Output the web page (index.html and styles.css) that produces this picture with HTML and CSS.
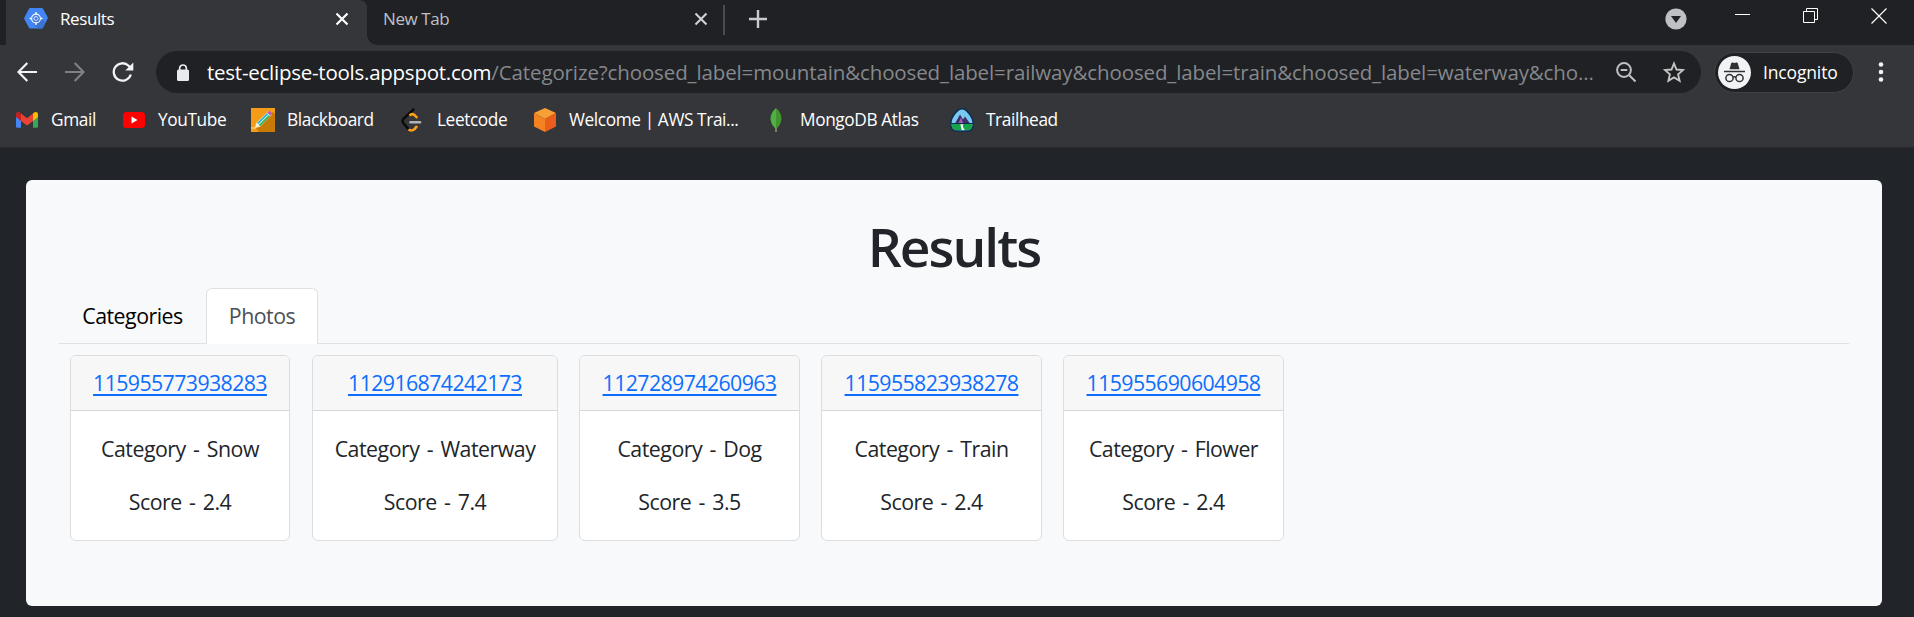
FILE: index.html
```html
<!DOCTYPE html>
<html lang="en">
<head>
<meta charset="utf-8">
<title>Results</title>
<link rel="stylesheet" href="styles.css">
</head>
<body>
<header class="browser">
  <div class="tabstrip">
    <div class="tab tab-active">
      <svg class="tab-icon" width="24" height="24" viewBox="0 0 24 24"><path d="M6.2 1h11.6q.8 0 1.200.7l4.600 8.300q.5.900 0 1.800l-4.600 9q-.4.700-1.200.7H6.200q-.8 0-1.200-.7L.4 12.300q-.5-.900 0-1.800L5 1.700Q5.400 1 6.200 1Z" fill="#4285f4"/><path d="m15 8 6.500 7.500-3 5.300q-.4.700-1.200.7H13l-4-6Z" fill="#3a74d4"/><circle cx="12" cy="11.500" r="4.400" fill="none" stroke="#fff" stroke-width="1.100"/><circle cx="12" cy="11.500" r="2" fill="none" stroke="#d5e3fc"/><path d="M12 5V7M12 16v2M5.500 11.500h2M16.500 11.500h2" stroke="#fff" stroke-width="1.300"/></svg>
      <span class="tab-title">Results</span>
      <svg class="tab-close" width="14" height="14" viewBox="0 0 14 14"><path d="m1.500 1.500 11 11m0-11-11 11" stroke="#fff" stroke-width="2.200"/></svg>
    </div>
    <div class="tab tab-idle">
      <span class="tab-title">New Tab</span>
      <svg class="tab-close" width="14" height="14" viewBox="0 0 14 14"><path d="m1.500 1.500 11 11m0-11-11 11" stroke="#d0d3d6" stroke-width="2.100"/></svg>
    </div>
    <span class="tab-divider"></span>
    <svg class="new-tab" width="18" height="18" viewBox="0 0 18 18"><path d="M9 0v18M0 9h18" stroke="#c8cbcf" stroke-width="2.400"/></svg>
    <div class="window-controls">
      <svg width="22" height="22" viewBox="0 0 22 22"><circle cx="11" cy="11" r="10.600" fill="#bdc1c6"/><path d="M6 8h10l-5 7Z" fill="#202124"/></svg>
      <svg class="minimize" width="15" height="1" viewBox="0 0 15 1"><path d="M0 .5h15" stroke="#fff"/></svg>
      <svg class="restore" width="15" height="15" viewBox="0 0 15 15" fill="none" stroke="#fff"><path d="M.5 3.500h11v11H.5ZM3.500 3.500v-3h11v11h-3"/></svg>
      <svg class="close" width="16" height="16" viewBox="0 0 16 16"><path d="m.5.500 15 15m0-15-15 15" stroke="#fff" stroke-width="1.200"/></svg>
    </div>
  </div>

  <div class="toolbar">
    <svg class="nav-icon" width="20" height="20" viewBox="0 0 20 20" fill="none" stroke="#f1f3f4" stroke-width="2.200"><path d="M20 10H1.500M10.300 1 1.500 10l8.800 9"/></svg>
    <svg class="nav-icon" width="20" height="20" viewBox="0 0 20 20" fill="none" stroke="#808184" stroke-width="2.200"><path d="M0 10h18.500M9.700 1l8.800 9-8.800 9"/></svg>
    <svg class="nav-icon" width="22" height="20" viewBox="0 0 22 20"><path d="M18.800 12.500a8.700 8.700 0 1 1-2.200-8.700l2.400 2.400" fill="none" stroke="#f1f3f4" stroke-width="2.300"/><path d="M21.300.5v8h-8Z" fill="#f1f3f4"/></svg>
    <div class="omnibox">
      <svg width="12" height="17" viewBox="0 0 12 17"><rect y="5.500" width="12" height="11.500" rx="1.500" fill="#e8eaed"/><path d="M2.700 6.500V4.300a3.300 3.300 0 0 1 6.600 0v2.200" fill="none" stroke="#e8eaed" stroke-width="1.700"/></svg>
      <p class="url"><span class="url-host">test-eclipse-tools.appspot.com</span><span class="url-path">/Categorize?choosed_label=mountain&amp;choosed_label=railway&amp;choosed_label=train&amp;choosed_label=waterway&amp;cho...</span></p>
      <svg class="zoom-icon" width="21" height="21" viewBox="0 0 21 21" fill="none" stroke="#bdc1c6" stroke-width="2"><circle cx="8" cy="8" r="6.900"/><path d="M4.700 8h6.600M13 13l6.500 6.500" /></svg>
      <svg class="star-icon" width="22" height="22" viewBox="0 0 22 22"><path d="m11 2.500 2.500 6 6.500.600-4.900 4.300 1.500 6.300-5.600-3.300-5.600 3.300 1.500-6.300L2 9.100l6.500-.600Z" fill="none" stroke="#c4c5c7" stroke-width="1.900"/></svg>
    </div>
    <div class="incognito">
      <svg width="33" height="33" viewBox="0 0 33 33"><circle cx="16.500" cy="16.500" r="16.500" fill="#f1f3f4"/><path d="m11.500 13.300 1.700-6q.4-1.200 1.500-.8l1.800.5 1.800-.5q1.200-.4 1.500.8l1.700 6Z" fill="#303134"/><path d="M6 15.500h21" stroke="#303134" stroke-width="1.500"/><g fill="none" stroke="#303134" stroke-width="1.500"><circle cx="11.500" cy="22" r="3.600"/><circle cx="21.500" cy="22" r="3.600"/><path d="M15 21.300q1.500-1 3 0"/></g></svg>
      <span class="incognito-label">Incognito</span>
    </div>
    <svg class="menu-icon" width="6" height="20" viewBox="0 0 6 20" fill="#f1f3f4"><circle cx="3" cy="2.500" r="2.300"/><circle cx="3" cy="10" r="2.300"/><circle cx="3" cy="17.500" r="2.300"/></svg>
  </div>

  <nav class="bookmarks">
    <div class="bookmark">
      <svg width="24" height="24" viewBox="0 0 24 24"><path d="M1 7v11.500q0 1.300 1.300 1.300H6V9Z" fill="#4285f4"/><path d="M18 9v10.800h3.700q1.300 0 1.300-1.300V7Z" fill="#34a853"/><path d="M18 5.500V13l5-4V6.300c0-2.500-2.500-3-4-1.800Z" fill="#fbbc04"/><path d="M1 6.300V9l5 4V5.500L5 4.500C3.500 3.300 1 3.800 1 6.300Z" fill="#c5221f"/><path d="m6 5.500 6 4.700 6-4.700V13l-6 4.500L6 13Z" fill="#ea4335"/></svg>
      <span class="bookmark-label">Gmail</span>
    </div>
    <div class="bookmark">
      <svg width="24" height="24" viewBox="0 0 24 24"><rect x="1" y="4" width="22" height="16" rx="3.500" fill="#f00"/><path d="m9.500 8.500 6 3.500-6 3.500Z" fill="#fff"/></svg>
      <span class="bookmark-label">YouTube</span>
    </div>
    <div class="bookmark">
      <svg width="24" height="24" viewBox="0 0 24 24"><path d="M0 0h24v24H0Z" fill="#f59b18"/><path d="M22 4v0l2 2v18H8l-3-4Z" fill="#c87a06"/><path d="m4 20 1.200-5L17.500 3 21 6.500 9 18.800Z" fill="#fff1cf"/><path d="M6 15 16 5l1.300 1.300-10 10Z" fill="#20b8de"/><path d="m7.800 17 10-10 1.300 1.200L9 18.300Z" fill="#2fae52"/><path d="m16.200 4.500 1.500-1.200q.8-.6 1.600.2l1.300 1.300q.7.800 0 1.600l-1.300 1.300Z" fill="#b65cb8"/><path d="M0 20h5" stroke="#ffe0a0"/></svg>
      <span class="bookmark-label">Blackboard</span>
    </div>
    <div class="bookmark">
      <svg width="24" height="24" viewBox="0 0 24 24" fill="none" stroke-width="2.500"><path d="M12.500 1.500 2.500 10.800Q.7 13 2.500 15.200L7 20.500" stroke="#0b0b0b" stroke-linecap="round"/><path d="M8.500 7.500Q11.300 4.800 14 7.500l2.300 2.500M7.500 21.500Q12 24.500 16 18" stroke="#ffa116"/><path d="M9.500 14.200h9.500" stroke="#b3b3b3" stroke-linecap="round"/></svg>
      <span class="bookmark-label">Leetcode</span>
    </div>
    <div class="bookmark">
      <svg width="24" height="24" viewBox="0 0 24 24"><path d="m12 0 11 5-11 6L1 5Z" fill="#f9a035"/><path d="m1 5 11 6v13L1 18.500Z" fill="#f58220"/><path d="m23 5-11 6v13l11-5.500Z" fill="#ea5d1c"/></svg>
      <span class="bookmark-label">Welcome | AWS Trai...</span>
    </div>
    <div class="bookmark">
      <svg width="24" height="24" viewBox="0 0 24 24"><path d="M12 19v5" stroke="#a6a385" stroke-width="1.300"/><path d="M12 0C3.500 7.500 6 16 12 21Z" fill="#4fb043"/><path d="M12 0c8.500 7.500 6 16 0 21Z" fill="#43932f"/></svg>
      <span class="bookmark-label">MongoDB Atlas</span>
    </div>
    <div class="bookmark">
      <svg width="24" height="24" viewBox="0 0 24 24"><path d="M12 .8c4 0 11 7.500 11.200 14.500.1 3.500-1.200 7-4.200 7.500q-7 .7-14 0c-3-.5-4.300-4-4.200-7.500C1 8.300 8 .8 12 .8Z" fill="#79caf2" stroke="#0b2d56" stroke-width="1.500"/><path d="m5 15.500 5-9 3 5 2-3 5 7Z" fill="#3d2d68"/><path d="m8.500 15 2.500-5.500 2 5.500Z" fill="#a75eb1"/><path d="M1.500 15.500h21c.3 3.500-1 6-3.600 6.500q-6.900.7-13.800 0c-2.600-.5-3.900-3-3.600-6.500Z" fill="#17a34a"/><path d="M1 15.500h22" stroke="#0b2d56"/><path d="M10.500 16.200h3q-2 1.200 1.300 5.800h-3q-1.300-3.800-1.300-5.800Z" fill="#fff"/></svg>
      <span class="bookmark-label">Trailhead</span>
    </div>
  </nav>
</header>

<main class="page">
  <section class="panel">
    <h1 class="title">Results</h1>
    <nav class="nav-tabs">
      <a class="nav-link">Categories</a>
      <a class="nav-link nav-link-active">Photos</a>
    </nav>
    <div class="cards">
      <article class="card"><div class="card-header"><a class="card-link" href="#">115955773938283</a></div><div class="card-body"><p>Category - Snow</p><p>Score - 2.4</p></div></article>
      <article class="card"><div class="card-header"><a class="card-link" href="#">112916874242173</a></div><div class="card-body"><p>Category - Waterway</p><p>Score - 7.4</p></div></article>
      <article class="card"><div class="card-header"><a class="card-link" href="#">112728974260963</a></div><div class="card-body"><p>Category - Dog</p><p>Score - 3.5</p></div></article>
      <article class="card"><div class="card-header"><a class="card-link" href="#">115955823938278</a></div><div class="card-body"><p>Category - Train</p><p>Score - 2.4</p></div></article>
      <article class="card"><div class="card-header"><a class="card-link" href="#">115955690604958</a></div><div class="card-body"><p>Category - Flower</p><p>Score - 2.4</p></div></article>
    </div>
  </section>
</main>
</body>
</html>
```

FILE: styles.css
```css
* { box-sizing: border-box; }

body {
  margin: 0;
  height: 617px;
  overflow: hidden;
  background: #212529;
  font-family: "Open Sans", "Noto Sans", sans-serif;
}

p, h1 { margin: 0; }
svg { display: block; flex: none; }

.browser { height: 148px; background: #35363a; border-bottom: 1px solid #28292d; }

/* Tab strip */
.tabstrip { display: flex; height: 45px; background: #202124; }
.tab { display: flex; align-items: center; height: 45px; padding-bottom: 7px; font-size: 17px; letter-spacing: -0.4px; white-space: nowrap; }
.tab-active {
  width: 367px;
  padding-left: 24px;
  padding-right: 18px;
  color: #fff;
  background: radial-gradient(circle at 0 37px, #202124 6px, transparent 6.5px), linear-gradient(90deg, #202124 6px, #35363a 6px);
  background-repeat: no-repeat;
  border-top-right-radius: 8px;
}
.tab-title { flex: 1; padding-bottom: 2px; }
.tab-active .tab-title { margin-left: 12px; }
.tab-idle {
  width: 356px;
  padding-left: 16px;
  padding-right: 15px;
  color: #bdc1c6;
  background: radial-gradient(circle at 10px 0, #202124 9.5px, #35363a 10px) 0 35px / 10px 10px no-repeat;
}
.tab-divider { width: 2px; height: 30px; margin-top: 5px; background: #4b4c50; }
.new-tab { margin: 10px 0 0 24px; }
.window-controls { display: flex; align-items: flex-start; margin-left: auto; padding: 8px 27px 0 0; }
.minimize { margin: 6px 0 0 48px; }
.restore { margin-left: 53px; }
.close { margin-left: 53px; }

/* Address row */
.toolbar { display: flex; align-items: center; height: 54px; padding-left: 17px; }
.nav-icon { margin-right: 28px; }
.nav-icon + .nav-icon { margin-right: 27px; }
.omnibox {
  display: flex;
  align-items: center;
  width: 1545px;
  height: 42px;
  margin-left: -5px;
  padding: 0 16px 0 21px;
  border-radius: 21px;
  background: #202124;
}
.url { width: 1404px; margin-left: 18px; overflow: hidden; font-size: 20.5px; white-space: nowrap; }
.url-host { color: #fff; letter-spacing: -0.25px; }
.url-path { color: #85888c; letter-spacing: -0.12px; }
.zoom-icon { margin-left: 6px; }
.star-icon { margin-left: 26px; }
.incognito {
  display: flex;
  align-items: center;
  width: 140px;
  height: 41px;
  margin-left: 13px;
  padding-left: 3px;
  border: 1px solid #414246;
  border-radius: 21px;
  background: #202124;
}
.incognito-label { margin-left: 12px; padding-bottom: 1px; color: #fff; font-size: 17.5px; letter-spacing: -0.15px; }
.menu-icon { margin-left: 24px; }

/* Bookmarks bar */
.bookmarks { display: grid; grid-template-columns: 107px 129px 150px 132px 231px 186px 150px; height: 42px; padding-left: 15px; align-items: center; }
.bookmark { display: flex; align-items: center; gap: 12px; color: #fff; font-size: 17.3px; letter-spacing: -0.4px; white-space: nowrap; }
.bookmark-label { padding-bottom: 2px; }

/* Page content */
.page { padding: 32px 32px 0 26px; }
.panel { height: 426px; padding: 32px 33px; border-radius: 6px; background: #f8f9fa; color: #212529; font-size: 21.33px; line-height: 32px; }
.title { height: 76px; font-size: 53.3px; font-weight: 600; line-height: 70px; letter-spacing: -2px; text-align: center; }
.nav-tabs { display: flex; height: 56px; border-bottom: 1px solid #dee2e6; letter-spacing: -0.5px; }
.nav-link { width: 147px; height: 56px; padding-top: 12px; text-align: center; color: #000; }
.nav-link-active { width: 112px; border: 1px solid #dee2e6; border-bottom: 0; border-radius: 6px 6px 0 0; background: #fff; color: #495057; padding-top: 11px; }
.cards { display: grid; grid-template-columns: 220px 246px 221px 221px 221px; column-gap: 21px; padding: 11px 0 0 11px; text-align: center; }
.card:first-child { margin-right: -1px; }
.cards { grid-template-columns: 221px 246px 221px 221px 221px; }
.card { height: 186px; border: 1px solid #dcdddf; border-radius: 6px; background: #fff; overflow: hidden; letter-spacing: -0.6px; }
.card:first-child { margin-right: 1px; }
.card-header { height: 55px; padding-top: 11px; border-bottom: 1px solid #d8d8d8; background: #f7f7f7; }
.card-link { color: #0d6efd; text-decoration-thickness: 2px; text-underline-offset: 3px; }
.card-body { display: flex; flex-direction: column; gap: 21px; padding-top: 22px; letter-spacing: -0.5px; word-spacing: 2.3px; }
```
